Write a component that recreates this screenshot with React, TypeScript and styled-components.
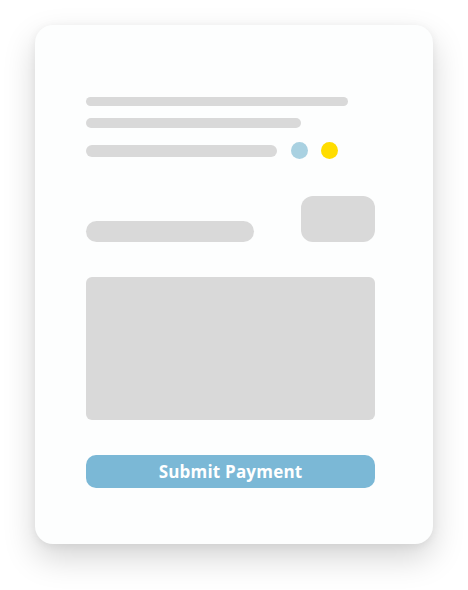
import React from "react";
import styled, { createGlobalStyle } from "styled-components";

const Global = createGlobalStyle`
  html, body { margin: 0; padding: 0; background: #ffffff; }
  body { width: 468px; height: 590px; overflow: hidden; font-family: "Open Sans", "Noto Sans", sans-serif; }
`;

const Page = styled.div`
  padding: 25px 35px 0 35px;
  width: 468px;
  box-sizing: border-box;
`;

const Card = styled.div`
  width: 398px;
  height: 519px;
  box-sizing: border-box;
  background: #fdfefe;
  border-radius: 18px;
  box-shadow: 0 14px 32px rgba(0, 0, 0, 0.17), 0 2px 10px rgba(0, 0, 0, 0.06);
  padding: 72px 58px 0 51px;
  display: flex;
  flex-direction: column;
`;

const Bar = styled.div<{ $w: number; $h: number }>`
  width: ${(p) => p.$w}px;
  height: ${(p) => p.$h}px;
  border-radius: ${(p) => p.$h / 2}px;
  background: #d9d9d9;
  flex: none;
`;

const Lines = styled.div`
  display: flex;
  flex-direction: column;
  gap: 12px;
`;

const DotRow = styled.div`
  display: flex;
  align-items: center;
  margin-top: 2px;
`;

const Dot = styled.div<{ $c: string; $ml: number }>`
  width: 17px;
  height: 17px;
  border-radius: 50%;
  background: ${(p) => p.$c};
  margin-left: ${(p) => p.$ml}px;
  flex: none;
`;

const MidRow = styled.div`
  display: flex;
  justify-content: space-between;
  align-items: flex-end;
  margin-top: 37px;
`;

const SmallBox = styled.div`
  width: 74px;
  height: 46px;
  border-radius: 12px;
  background: #d9d9d9;
`;

const BigBox = styled.div`
  margin-top: 35px;
  height: 143px;
  border-radius: 6px;
  background: #d9d9d9;
`;

const Button = styled.button`
  margin-top: 35px;
  height: 33px;
  border: none;
  border-radius: 10px;
  background: #7bb8d6;
  color: #ffffff;
  font-family: "Open Sans", "Noto Sans", sans-serif;
  font-weight: 700;
  font-size: 17px;
  letter-spacing: 0.2px;
  padding: 0 0 1px 0;
  cursor: pointer;
`;

export default function App() {
  return (
    <>
      <Global />
      <Page>
        <Card>
          <Lines>
            <Bar $w={262} $h={9} />
            <Bar $w={215} $h={10} />
            <DotRow>
              <Bar $w={191} $h={12} />
              <Dot $c="#a9d1e1" $ml={14} />
              <Dot $c="#ffdd00" $ml={13} />
            </DotRow>
          </Lines>
          <MidRow>
            <Bar $w={168} $h={21} />
            <SmallBox />
          </MidRow>
          <BigBox />
          <Button>Submit Payment</Button>
        </Card>
      </Page>
    </>
  );
}
